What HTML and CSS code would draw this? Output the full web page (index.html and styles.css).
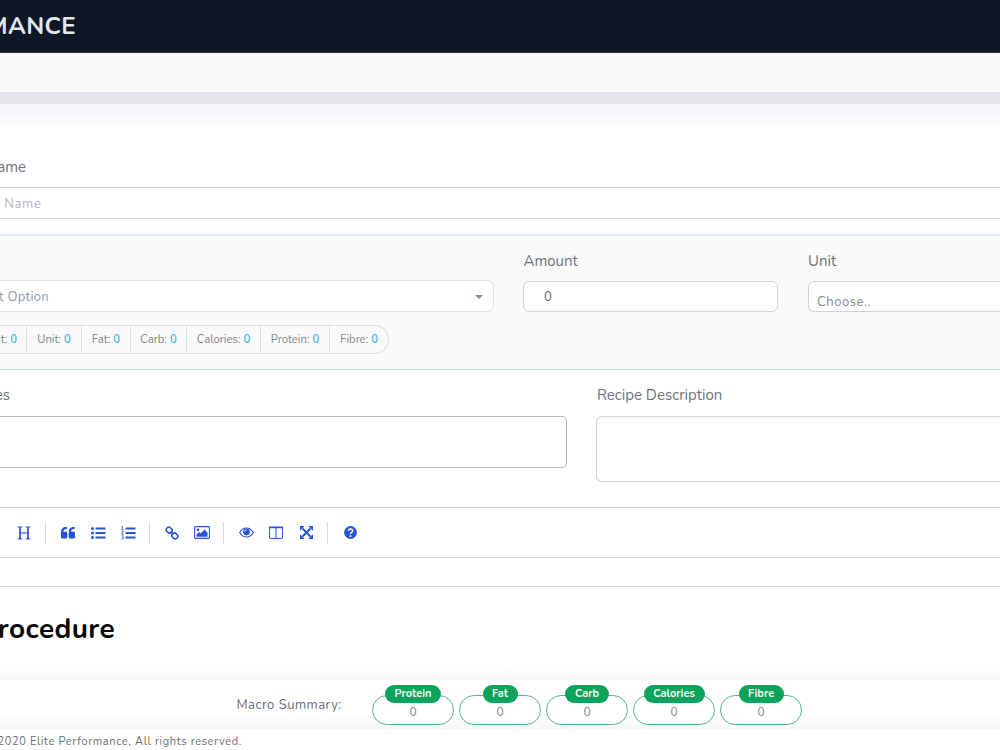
FILE: index.html
```html
<!DOCTYPE html>
<html lang="en">
<head>
<meta charset="utf-8">
<title>Elite Performance</title>
<link rel="stylesheet" href="styles.css">
</head>
<body>
<div class="page">
  <header class="topbar"><span class="brand">PERFORMANCE</span></header>
  <div class="subbar"></div>
  <div class="band"></div>
  <main class="content">
    <section class="name-group">
      <label class="label edge name-label">Recipe Name</label>
      <div class="name-input"><span class="edge">Recipe Name</span></div>
    </section>
    <section class="ingredient">
      <div class="picker">
        <div class="select"><span class="edge select-text">Select Option</span><i class="caret"></i></div>
        <div class="facts">
          <span class="fact first">Amount: <b>0</b></span>
          <span class="fact f-unit">Unit: <b>0</b></span>
          <span class="fact f-fat">Fat: <b>0</b></span>
          <span class="fact f-carb">Carb: <b>0</b></span>
          <span class="fact f-cal">Calories: <b>0</b></span>
          <span class="fact f-protein">Protein: <b>0</b></span>
          <span class="fact f-fibre">Fibre: <b>0</b></span>
        </div>
      </div>
      <div class="field amount"><label class="label amount-label">Amount</label><div class="input">0</div></div>
      <div class="field unit"><label class="label">Unit</label><div class="input choose">Choose..</div></div>
    </section>
    <section class="details">
      <div class="notes"><label class="label edge notes-label">Notes</label><div class="notes-box"></div></div>
      <div class="description"><label class="label desc-label">Recipe Description</label><div class="desc-box"></div></div>
    </section>
    <section class="editor">
      <div class="toolbar">
        <span class="tool heading-tool"><svg width="14" height="14" viewBox="0 0 14 14"><path d="M.5 1h4.800M8.700 1h4.800M.5 13h4.800M8.700 13h4.800" stroke-width="1.100"/><path d="M3 1v12M11 1v12" stroke-width="1.700"/><path d="M3 7h8" stroke-width="1.100"/></svg></span>
        <i class="sep"></i>
        <span class="tool"><svg width="14" height="12" viewBox="0 0 14 12"><path class="solid" d="M0 5C0 2 2 0 5 0h1v2H5C3.500 2 2.400 3 2.400 4.800H5q1.300 0 1.300 1.300v4Q6.300 11.500 5 11.500H1.500Q0 11.500 0 10zM7.700 5c0-3 2-5 5-5h1v2h-1c-1.500 0-2.600 1-2.600 2.800h2.600q1.300 0 1.300 1.300v4q0 1.400-1.300 1.400H9.200Q7.700 11.500 7.700 10z"/></svg></span>
        <span class="tool"><svg width="15" height="12" viewBox="0 0 15 12"><g class="solid"><circle cx="1.500" cy="1.500" r="1.500"/><circle cx="1.500" cy="6" r="1.500"/><circle cx="1.500" cy="10.500" r="1.500"/><path d="M4.500.6h10v1.900h-10zM4.500 5h10v2h-10zM4.500 9.500h10v2h-10z"/></g></svg></span>
        <span class="tool"><svg width="15" height="14" viewBox="0 0 15 14"><path class="solid" d="M4.500 1.600h10v1.900h-10zM4.500 6h10v2h-10zM4.500 10.500h10v2h-10z"/><path d="M.5 1l1-.6v3.300M.4 3.700h2.200M.5 5.500q2-1 2 .3L.5 8.200h2.200M.6 9.800h1.800l-1 1.300q1.300 0 1.200 1.100-.3 1.300-2.100.7" stroke-width=".8"/></svg></span>
        <i class="sep sep-two"></i>
        <span class="tool"><svg width="14" height="14" viewBox="0 0 14 14"><g stroke-width="1.600"><rect x="1.200" y="1.600" width="6" height="5" rx="2.200" transform="rotate(45 4.200 4.100)"/><rect x="6.800" y="7.400" width="6" height="5" rx="2.200" transform="rotate(45 9.800 9.900)"/><path d="M5.500 5.500l3 3"/></g></svg></span>
        <span class="tool"><svg width="16" height="13" viewBox="0 0 16 13"><rect x=".6" y=".6" width="14.800" height="11.800" rx=".8" stroke-width="1.100"/><path class="solid" d="M2.500 10.700V8.500L5 6l1.500 1.500 4-4 3 3v4.200z"/><circle class="solid" cx="4" cy="3.800" r="1.400"/></svg></span>
        <i class="sep"></i>
        <span class="tool"><svg width="15" height="11" viewBox="0 0 15 11"><path d="M.6 5.500Q3.300 1 7.500 1t6.900 4.500Q11.700 10 7.500 10T.6 5.500z" stroke-width="1.100"/><circle class="solid" cx="7.500" cy="4.800" r="3.400"/><path d="M5.700 4.700q0-1.800 1.800-1.800" class="shine"/></svg></span>
        <span class="tool"><svg width="14" height="13" viewBox="0 0 14 13"><path d="M.6 1v11q0 .4.400.4h12q.4 0 .4-.4V1M7 2v10" stroke-width="1"/><path class="solid" d="M0 .5h14v1.700H0z"/></svg></span>
        <span class="tool"><svg width="13" height="13" viewBox="0 0 13 13"><path d="M2.500 2.500l8 8M10.500 2.500l-8 8" stroke-width="2"/><path class="solid" d="M0 0h4.700L0 4.700zM13 0v4.700L8.300 0zM0 13V8.300L4.700 13zM13 13H8.300L13 8.300z"/></svg></span>
        <i class="sep"></i>
        <span class="tool"><svg width="13" height="13" viewBox="0 0 12 12"><circle class="solid" cx="6" cy="6" r="5.900"/><path class="mark" d="M4 4.400Q4.200 2.800 6 2.800t2 1.600Q8 5.300 6.900 5.900 6 6.400 6 7.400M6 8.500v1.600"/></svg></span>
      </div>
      <div class="editor-body"></div>
    </section>
    <h2 class="edge procedure">Procedure</h2>
  </main>
  <div class="summary-shadow"></div>
  <section class="summary">
    <span class="summary-label">Macro Summary:</span>
    <div class="macro"><b>Protein</b><span>0</span></div>
    <div class="macro"><b class="m-fat">Fat</b><span>0</span></div>
    <div class="macro"><b class="m-carb">Carb</b><span>0</span></div>
    <div class="macro"><b class="m-cal">Calories</b><span>0</span></div>
    <div class="macro"><b class="m-fibre">Fibre</b><span>0</span></div>
  </section>
  <footer class="edge copyright">© 2020 Elite Performance, All rights reserved.</footer>
</div>
</body>
</html>
```
FILE: styles.css
```css
* { box-sizing: border-box; }
body { margin: 0; background: #fff; font-family: Nunito, Lato, "Noto Sans", sans-serif; color: #6f747d; }
.page { width: 1000px; height: 750px; overflow: hidden; display: flex; flex-direction: column; }
/* Labels anchored by their right edge, running off the left side */
.edge { display: flex; justify-content: flex-end; white-space: nowrap; }
.topbar { height: 53px; flex: none; background: #0e1726; border-bottom: 1px solid #30323c; }
.brand { display: flex; justify-content: flex-end; width: 76px; font-size: 24px; line-height: 52px; font-weight: 700; letter-spacing: .4px; color: #e0e6ed; }
.subbar { height: 39px; flex: none; background: #fafafa; }
.band { height: 12px; flex: none; background: #e3e5eb; }
.content { height: 564px; flex: none; background: linear-gradient(#f3f4f9 0, #fff 26px); }
.name-group { height: 130px; padding-top: 51px; }
.label { height: 24px; line-height: 25px; font-size: 15px; color: #6f727a; white-space: nowrap; }
.name-label { width: 26px; }
.name-input { height: 32px; margin-top: 8px; border: solid #cdd3dc; border-width: 1px 0; background: #fff; font-size: 13px; line-height: 32px; letter-spacing: .7px; color: #b2b5be; }
.name-input .edge { width: 41.500px; }
.ingredient { height: 136px; border-top: 2px solid #deebfb; border-bottom: 1px solid #c9dfea; background: #fafafa; display: flex; }
.picker { width: 494px; padding-top: 44px; }
.select { height: 32px; border: 1px solid #e2e4e8; border-left: 0; border-radius: 0 6px 6px 0; background: #fff; display: flex; align-items: center; justify-content: space-between; padding-right: 10px; }
.select-text { width: 49px; padding-top: 1px; font-size: 13px; letter-spacing: .3px; color: #929ba7; }
.caret { border: 4px solid transparent; border-top: 4px solid #8b8da6; border-bottom: 0; margin-top: 1px; }
.facts { width: 389px; height: 29px; margin-top: 13px; border: 1px solid #dddfe2; border-left: 0; border-radius: 0 15px 15px 0; display: flex; overflow: hidden; font-size: 11.300px; line-height: 28px; color: #858689; white-space: nowrap; }
.fact { height: 26px; border-right: 1px solid #dddfe2; display: flex; gap: 3px; justify-content: center; flex: none; }
.fact b { color: #36b6ec; font-weight: 600; }
.first { width: 27px; padding-right: 9px; justify-content: flex-end; }
.f-unit { width: 55px; }
.f-fat { width: 49px; }
.f-carb { width: 56px; }
.f-cal { width: 74px; }
.f-protein { width: 69px; }
.f-fibre { width: 58px; border-right: 0; }
.field { display: flex; flex-direction: column; padding-top: 13px; }
.amount { width: 255px; margin-left: 29px; }
.amount-label { padding-left: .5px; }
.unit { flex: 1; margin-left: 30px; }
.input { height: 31px; margin-top: 8px; border: 1px solid #cfd3dd; border-radius: 6px; background: #fff; padding-left: 20px; font-size: 13px; line-height: 30px; color: #666974; }
.choose { border-right: 0; border-radius: 6px 0 0 6px; padding-left: 8px; line-height: 40px; letter-spacing: .55px; color: #85888e; }
.details { height: 137px; display: flex; gap: 29px; padding-top: 13px; }
.notes { width: 567px; }
.notes-label { width: 10px; }
.notes-box { height: 52px; margin-top: 9px; border: 1px solid #b7b8bc; border-left: 0; border-radius: 0 5px 5px 0; }
.description { flex: 1; }
.desc-label { display: block; padding-left: 1px; }
.desc-box { height: 66px; margin-top: 9px; border: 1px solid #ced2da; border-right: 0; border-radius: 6px 0 0 6px; }
.editor { height: 80px; border: solid #ced3d9; border-width: 1px 0; }
.toolbar { height: 50px; display: flex; align-items: center; padding-left: 9px; border-bottom: 1px solid #ced3d9; }
.tool { width: 30.200px; height: 30px; display: flex; align-items: center; justify-content: center; flex: none; }
.tool svg { fill: none; stroke: #2853d6; display: block; }
.tool .solid { fill: #2853d6; stroke: none; }
.tool .shine { stroke: #fff; stroke-width: .8; }
.tool .mark { stroke: #fff; stroke-width: 1.500; }
.sep { width: 1px; height: 22px; background: #d9dce0; margin: 0 7px 0 5.800px; flex: none; }
.sep-two { margin-left: 5.200px; }
.procedure { width: 115px; height: 84px; margin: 0; line-height: 84px; font-size: 28px; font-weight: 700; letter-spacing: .4px; color: #060606; }
.summary-shadow { height: 12px; flex: none; background: linear-gradient(#fff, #f6f6f6); }
.summary { height: 49px; flex: none; display: flex; gap: 5px; background: linear-gradient(#fff 70%, #f7f7f7); }
.summary-label { width: 367px; padding-left: 236.500px; font-size: 13px; line-height: 50px; letter-spacing: .5px; color: #6b6b7d; white-space: nowrap; }
.macro { width: 82px; height: 44px; padding-top: 5px; display: flex; flex-direction: column; align-items: center; font-size: 12px; color: #818184; }
.macro b { width: 56px; height: 18px; flex: none; border-radius: 10px; background: #0da35c; color: #e9fff4; font-size: 11px; font-weight: 700; line-height: 18px; text-align: center; z-index: 1; }
.macro span { width: 82px; height: 30px; flex: none; margin-top: -8px; border: 1px solid #50b787; border-radius: 15px; background: #fff; line-height: 33px; text-align: center; }
.macro .m-fat { width: 35px; }
.macro .m-carb { width: 44px; }
.macro .m-cal { width: 61px; }
.macro .m-fibre { width: 45px; }
.copyright { width: 242px; height: 21px; flex: none; font-size: 11px; line-height: 25px; letter-spacing: .65px; color: #6b6c76; }
```
